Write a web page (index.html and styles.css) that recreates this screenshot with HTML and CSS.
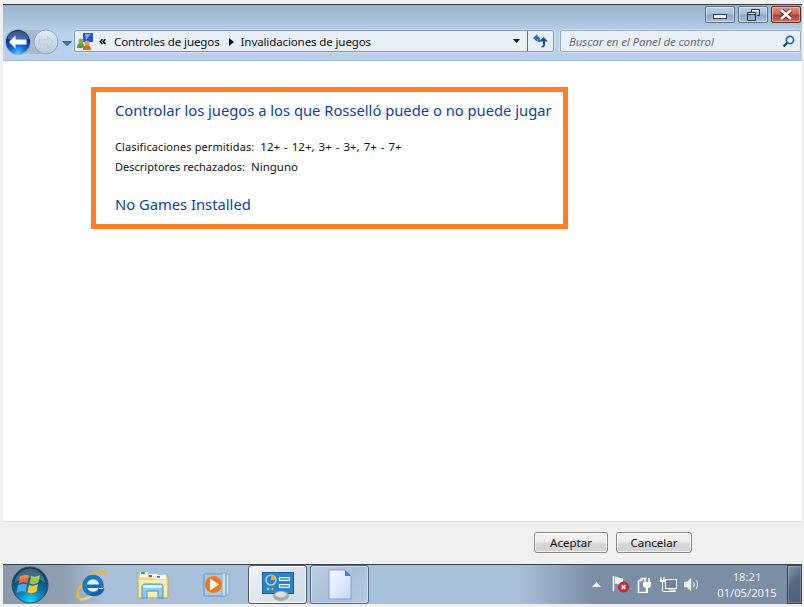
FILE: index.html
```html
<!DOCTYPE html>
<html lang="es">
<head>
<meta charset="utf-8">
<title>Invalidaciones de juegos</title>
<link rel="stylesheet" href="styles.css">
</head>
<body>
<div class="screen">
  <div class="window">
    <header class="chrome">
      <div class="caption">
        <button class="cap cap-min"><span class="min-glyph"></span></button>
        <button class="cap cap-restore">
          <svg width="13" height="12" viewBox="0 0 13 12"><path d="M4.500 3V.5h8v6H10M.5 3.500h8v8h-8zM.5 5.500h8" fill="none" stroke="#26323f" stroke-width="1"/><path d="M5 1.500h7M1 4.500h7" stroke="#fff"/></svg>
        </button>
        <button class="cap cap-close">
          <svg width="16" height="11" viewBox="0 0 16 11"><path d="M3 1l10 9M13 1L3 10" stroke="#5a2a22" stroke-width="4.400"/><path d="M3 1l10 9M13 1L3 10" stroke="#fff" stroke-width="2.600"/></svg>
        </button>
      </div>
      <div class="navrow">
        <div class="navpill">
          <svg class="nav-svg" width="60" height="28" viewBox="0 0 60 28">
            <defs>
              <radialGradient id="backg" cx=".5" cy=".95" r=".85"><stop offset="0" stop-color="#3fd2fd"/><stop offset=".4" stop-color="#0f66cc"/><stop offset=".8" stop-color="#06348c"/><stop offset="1" stop-color="#021f60"/></radialGradient>
              <linearGradient id="fwdg" x1="0" y1="0" x2="0" y2="1"><stop offset="0" stop-color="#e6edf5"/><stop offset="1" stop-color="#b5c8dc"/></linearGradient>
            </defs>
            <rect x="12" y="2" width="34" height="24" rx="10" fill="#a6b9ce"/>
            <circle cx="42" cy="14" r="12" fill="url(#fwdg)" stroke="#8fa3b8"/>
            <path d="M49 14l-5.500-5.500v3.300h-8.500v4.400h8.500v3.300z" fill="#cfdbe8" stroke="#a9bbce" stroke-width=".6"/>
            <circle cx="14" cy="14" r="12.600" fill="url(#backg)" stroke="#9fb2c8" stroke-width="1.200"/>
            <path d="M3.500 11a10.500 8 0 0 1 21 0a20 7 0 0 1-21 0" fill="#fff" opacity=".25"/>
            <path d="M5 14l6.500-6.500v4h11v5h-11v4z" fill="#fff"/>
          </svg>
          <svg class="drop" width="10" height="5" viewBox="0 0 10 5"><path d="M.5.5h9L5 4.500z" fill="#2f7fc6" stroke="#1d4f80" stroke-width=".7"/></svg>
        </div>
        <div class="address">
          <svg class="homeicon" width="17" height="17" viewBox="0 0 17 17">
            <rect x="6" y="0" width="10" height="9" fill="#2a4fd0"/>
            <path d="M8 1l6 0-5 6z" fill="#7fa6ef"/>
            <circle cx="4" cy="8" r="2.600" fill="#7cb55a"/><path d="M0 15c0-4 2-5 4-5s3 1 3 3v2z" fill="#5c9a3e"/>
            <circle cx="10" cy="10" r="2.600" fill="#d9a25e"/><path d="M6 17c0-4 2-5 4-5s4 1 4 5z" fill="#c6791f"/>
          </svg>
          <span class="chev">«</span>
          <span class="crumb crumb-first">Controles de juegos</span>
          <svg class="crumb-arrow" width="5" height="8" viewBox="0 0 5 8"><path d="M0 0l5 4-5 4z" fill="#111"/></svg>
          <span class="crumb">Invalidaciones de juegos</span>
          <svg class="addr-drop" width="7" height="4" viewBox="0 0 7 4"><path d="M0 0h7L3.500 4z" fill="#101a3a"/></svg>
          <span class="refresh">
            <svg width="15" height="14" viewBox="0 0 15 14">
              <path d="M0 4l4.500-4v2.600c2 0 2.500 1 2.500 2.400v3H5V6c0-.7-.2-1-.5-1v3z" fill="#2b6fb8"/>
              <path d="M10.500 3L15 7.500h-3V11c0 1.500-1 2.500-3.500 2.500V12c1 0 1.500-.4 1.500-1V7.500H6z" fill="#174f9a"/>
            </svg>
          </span>
        </div>
        <div class="search">
          <span class="search-text">Buscar en el Panel de control</span>
          <svg width="13" height="13" viewBox="0 0 13 13"><circle cx="8" cy="5" r="3.600" fill="#eaf3fb" stroke="#2a6cb0" stroke-width="1.800"/><path d="M5.300 7.800L1.500 11.500" stroke="#173f78" stroke-width="2.400"/></svg>
        </div>
      </div>
    </header>
    <main class="content">
      <section class="panel">
        <h1 class="link-title">Controlar los juegos a los que Rosselló puede o no puede jugar</h1>
        <p class="meta meta-first"><span>Clasificaciones permitidas:</span><span class="rating">12+ - 12+, 3+ - 3+, 7+ - 7+</span></p>
        <p class="meta"><span>Descriptores rechazados:</span><span class="rating">Ninguno</span></p>
        <h2 class="link-title none">No Games Installed</h2>
      </section>
    </main>
    <footer class="actions">
      <button class="btn btn-ok">Aceptar</button>
      <button class="btn btn-cancel">Cancelar</button>
    </footer>
  </div>
  <div class="taskbar">
    <svg class="orb" width="38" height="38" viewBox="0 0 38 38">
      <defs>
        <radialGradient id="orbg" cx=".5" cy=".95" r=".95"><stop offset="0" stop-color="#1cdcf8"/><stop offset=".3" stop-color="#0d8cbc"/><stop offset=".65" stop-color="#0d5580"/><stop offset="1" stop-color="#12334f"/></radialGradient>
      </defs>
      <circle cx="19" cy="19" r="18" fill="url(#orbg)" stroke="#2a5368"/>
      <path d="M9 10.500c3-2 6-2 9-1l-1.500 7.500c-3-1-6-1-9 1z" fill="#ea6a30"/>
      <path d="M20 10c3 1 6 1 9-1l-1.500 7.500c-3 2-6 2-9 1z" fill="#9ac845"/>
      <path d="M7 19.500c3-2 6-2 9-1L14.500 26c-3-1-6-1-9 1z" fill="#4aa8ea"/>
      <path d="M18 19c3 1 6 1 9-1L25.500 25.500c-3 2-6 2-9 1z" fill="#fcc634"/>
      <path d="M3.500 17C5 6 14 2.500 19 2.500S33 6 34.500 17C26 10 12 10 3.500 17z" fill="#fff" opacity=".2"/>
    </svg>
    <span class="tb-icon tb-ie">
      <svg width="32" height="32" viewBox="0 0 32 32">
        <path d="M5 30C-3 25 10 5 27 2c3-.5 4 1 3 4" fill="none" stroke="#e6b83a" stroke-width="2.600"/>
        <path d="M5 30c3 1 8-1 12-4" fill="none" stroke="#edd27a" stroke-width="2.400"/>
        <circle cx="18" cy="16.500" r="8.500" fill="#dff0fb" stroke="#1b78c4" stroke-width="4.500"/>
        <path d="M12 15.500h14v3.500H12z" fill="#1668b5"/>
        <path d="M24 19.500h5.500c-1 4-4.500 7.500-10 7.500-2 0-3.500-.5-5-1.500l3-2.500c3 1 5.500 0 7-3.500z" fill="#0f5ea8"/>
        <path d="M24 19h4v1h-4z" fill="#dff0fb"/>
      </svg>
    </span>
    <span class="tb-icon tb-folder">
      <svg width="32" height="28" viewBox="0 0 32 28">
        <path d="M1 3h11l2 2h17v22H1z" fill="#eed98c" stroke="#c0a864"/>
        <rect x="3" y="1" width="8" height="5" fill="#fff"/><rect x="4" y="1" width="4" height="2" fill="#1db30e"/>
        <rect x="12" y="3" width="8" height="4" fill="#fff"/><rect x="12" y="4" width="3" height="2" fill="#d4352c"/>
        <rect x="20" y="4" width="9" height="4" fill="#fff"/><rect x="20" y="5" width="3" height="2" fill="#2a8ae0"/>
        <path d="M2 9h28v17H2z" fill="#faedb0"/>
        <path d="M5 27v-11c0-2 1-3 3-3h15c2 0 3 1 3 3v11h-5v-7H10v7z" fill="#8dcde8" stroke="#4a91b8"/>
        <path d="M6 14h19v3H6z" fill="#d5effa"/>
      </svg>
    </span>
    <span class="tb-icon tb-wmp">
      <svg width="32" height="26" viewBox="0 0 32 26">
        <path d="M4 2h22v22H4z" fill="#a9cbe4" stroke="#5d94bd"/>
        <path d="M22 1h4v23h-4zM26 2h3v21h-3z" fill="#cde2f1" stroke="#7eabcc"/>
        <circle cx="13.500" cy="12.500" r="8.500" fill="#ee7a19"/>
        <path d="M10 6.500l9 6-9 6z" fill="#fff"/>
      </svg>
    </span>
    <button class="task task-active">
      <svg class="cp-icon" width="32" height="29" viewBox="0 0 32 29">
        <rect x=".5" y=".5" width="31" height="21" fill="#2e83c5" stroke="#1e5e96"/>
        <circle cx="9" cy="8" r="5" fill="none" stroke="#cfe9f8" stroke-width="1.200"/>
        <path d="M9 3a5 5 0 0 1 5 5H9z" fill="#f6a11c"/>
        <rect x="17.500" y="5.500" width="10" height="3" fill="#5aa6dc" stroke="#e8f5fc"/>
        <rect x="17.500" y="12.500" width="10" height="3" fill="#5aa6dc" stroke="#e8f5fc"/>
        <circle cx="6" cy="17" r="1.200" fill="#9fe0f7"/><circle cx="10.500" cy="17" r="1.200" fill="#f6a11c"/>
        <ellipse cx="19" cy="24" rx="8" ry="5" fill="#a9aba9"/>
        <ellipse cx="19" cy="22.500" rx="5.500" ry="3" fill="#dfe0de"/>
      </svg>
    </button>
    <button class="task">
      <svg width="24" height="31" viewBox="0 0 24 31">
        <defs><linearGradient id="pageg" x1="0" y1="0" x2="1" y2="1"><stop offset="0" stop-color="#f7fbff"/><stop offset="1" stop-color="#c9d8fb"/></linearGradient></defs>
        <path d="M1 1h16l6 6v23H1z" fill="url(#pageg)" stroke="#8d9fcf"/>
        <path d="M17 1l6 6h-6z" fill="#2f86d8"/>
      </svg>
    </button>
    <div class="tray">
      <svg class="tray-up" width="9" height="5" viewBox="0 0 9 5"><path d="M0 5l4.500-5L9 5z" fill="#f2f5f8"/></svg>
      <svg class="tray-flag" width="17" height="17" viewBox="0 0 17 17">
        <path d="M1.500 0v15" stroke="#fff" stroke-width="1.500"/>
        <path d="M3 1c3-1 4 2 8 1v7c-4 1-5-2-8-1z" fill="#eef1f4"/>
        <circle cx="11.500" cy="11" r="5" fill="#e2262c" stroke="#7d1a1a" stroke-width=".6"/>
        <path d="M9.500 9l4 4M13.500 9l-4 4" stroke="#fff" stroke-width="1.500"/>
      </svg>
      <svg class="tray-plug" width="15" height="16" viewBox="0 0 15 16">
        <path d="M1.500 3.500h3v-2h5M1.500 3.500v12h8v-4" fill="none" stroke="#fff" stroke-width="1.500"/>
        <path d="M6 5h8v3c0 2-1 3-3 3h-2c-1 0-3-1-3-3z" fill="#fff"/>
        <path d="M8 1v4M12 1v4" stroke="#fff" stroke-width="1.500"/>
        <path d="M10 11v5" stroke="#fff" stroke-width="2"/>
      </svg>
      <svg class="tray-net" width="17" height="15" viewBox="0 0 17 15">
        <path d="M1 0v3M4 0v3" stroke="#fff" stroke-width="1.200"/><path d="M0 3h5v2H0z" fill="#fff"/><path d="M2.500 5v9" stroke="#fff" stroke-width="1.200"/>
        <rect x="5.500" y="2.500" width="11" height="9" fill="#6f8299" stroke="#fff"/>
        <path d="M9 13h6v1.500H3" stroke="#fff" stroke-width="1.200" fill="none"/>
      </svg>
      <svg class="tray-vol" width="15" height="15" viewBox="0 0 15 15">
        <path d="M0 5h3l4-4v13l-4-4H0z" fill="#eef1f4" stroke="#dfe4ea" stroke-width=".5"/>
        <path d="M9.500 5c1 1.500 1 3.500 0 5M12 3c2 2.500 2 6.500 0 9" fill="none" stroke="#e8ecf1" stroke-width="1.100"/>
      </svg>
      <div class="clock"><span>18:21</span><span>01/05/2015</span></div>
      <span class="show-desktop"></span>
    </div>
  </div>
</div>
</body>
</html>
```
FILE: styles.css
```css
* { box-sizing: border-box; }
html, body { margin: 0; padding: 0; background: #f0f0f0; }
body { font-family: "Noto Sans", "Open Sans", sans-serif; font-size: 12px; color: #000; overflow: hidden; }
button { font-family: inherit; padding: 0; cursor: default; }
svg { display: block; flex: none; }

.screen { width: 804px; height: 607px; padding: 4px 2px 3px 3px; display: flex; flex-direction: column; }
.window { flex: 1; display: flex; flex-direction: column; min-height: 0; }

/* window chrome */
.chrome { height: 57px; flex: none; border-top: 1px solid #3a3f45; border-bottom: 1px solid #a3bcd6; background: linear-gradient(#9ab3cf 0, #a9c3de 16px, #b9d1ea 28px, #b9d1ea 100%); display: flex; flex-direction: column; }
.caption { height: 17px; margin-top: 1px; display: flex; justify-content: flex-end; gap: 3px; padding-right: 1px; }
.cap { width: 30px; height: 17px; border: 1px solid #5d7187; border-radius: 2px; display: flex; align-items: center; justify-content: center; background: linear-gradient(#bfd2e6 0, #a7bfd8 48%, #88a5c4 52%, #aac4de 100%); box-shadow: inset 0 0 0 1px rgba(255,255,255,.4); }
.cap-close { border-color: #5d2a2f; background: linear-gradient(#dc9184 0, #c86a58 48%, #b13d2b 52%, #c7705c 100%); }
.min-glyph { width: 14px; height: 5px; border: 1px solid #2f3d4c; background: #fff; margin-top: 4px; }

.navrow { display: flex; align-items: flex-start; height: 24px; margin-top: 7px; }
.navpill { width: 71px; display: flex; align-items: center; flex: none; margin-top: -2px; height: 28px; }
.nav-svg { margin-left: 1px; }
.drop { margin-left: -2px; margin-top: 3px; }
.address { width: 480px; height: 22px; display: flex; align-items: center; background: #e9f0f8; border: 1px solid #8196ab; border-radius: 2px; box-shadow: 0 0 0 1px rgba(255,255,255,.35); }
.homeicon { margin-left: 2px; }
.chev { width: 9px; margin-left: 5px; font-size: 12px; line-height: 1; font-weight: 700; }
.crumb { font-size: 11.600px; color: #111; white-space: nowrap; letter-spacing: -.15px; }
.crumb-first { margin-left: 6px; }
.crumb-arrow { margin: 1px 7px 0 9px; }
.addr-drop { margin-left: auto; margin-right: 7px; }
.refresh { width: 26px; align-self: stretch; border-left: 1px solid #5a6a7c; display: flex; align-items: center; justify-content: center; }
.search { width: 241px; height: 22px; margin-left: 6px; display: flex; align-items: center; justify-content: space-between; padding: 0 5px 0 8px; background: #e9f0f8; border: 1px solid #9aabbd; border-radius: 2px; box-shadow: 0 0 0 1px rgba(255,255,255,.35); }
.search-text { font-size: 11.500px; font-style: italic; color: #6f6f6f; white-space: nowrap; letter-spacing: -.1px; }

/* content */
.content { flex: 1; background: #fff; padding: 26px 0 0 88px; min-height: 0; }
.panel { width: 477px; height: 142px; border: 5px solid #ff7f27; padding: 8px 0 0 19px; }
.link-title { margin: 0; font-weight: 400; font-size: 14.750px; line-height: 20px; color: #0b3fa8; white-space: nowrap; }
.meta { margin: 0; display: flex; gap: 6px; font-size: 11px; line-height: 21px; height: 21px; white-space: nowrap; color: #111; }
.meta-first { margin-top: 16px; height: 20px; }
.rating { font-size: 11.500px; word-spacing: 1px; }
.meta-first span:first-child { letter-spacing: .1px; }
.none { margin-top: 17px; }

/* footer */
.actions { height: 43px; flex: none; border-top: 1px solid #dfdfdf; background: #f0f0f0; display: flex; gap: 8px; justify-content: flex-end; padding: 10px 110px 0 0; }
.btn { height: 21px; font-size: 11.500px; color: #111; border: 1px solid #8a8a8a; border-radius: 3px; background: linear-gradient(#f4f4f4 0, #ececec 48%, #d8d8d8 52%, #d2d2d2 100%); box-shadow: inset 0 0 0 1px rgba(255,255,255,.7); }
.btn-ok { width: 74px; }
.btn-cancel { width: 76px; }

/* taskbar */
.taskbar { height: 40px; flex: none; display: flex; align-items: center; border-top: 1px solid #3a4450; background: linear-gradient(90deg, #8b98a8 0, #8f9eb0 60px, #a9c0dc 100px, #a9c0dc 515px, #7b8ea6 590px, #7b8ea6 100%); }
.orb { margin-left: 8px; }
.tb-icon { display: flex; align-items: center; justify-content: center; }
.tb-ie { margin-left: 26px; }
.tb-folder { margin-left: 30px; }
.tb-wmp { margin-left: 31px; }
.task { height: 39px; width: 59px; margin-left: 3px; display: flex; align-items: center; justify-content: center; border: 1px solid #56677a; border-radius: 3px; background: linear-gradient(135deg, #bdd0e4 0, #a8c0da 50%, #b5cae0 100%); box-shadow: inset 0 0 0 1px rgba(255,255,255,.4); }
.task-active { margin-left: 16px; border-color: #4a5868; background: linear-gradient(135deg, #f0f4f8 0, #dbe4ee 50%, #cfdbe8 100%); box-shadow: inset 0 0 0 1px #fff; }
.cp-icon { margin-top: 3px; }
.tray { margin-left: auto; display: flex; align-items: center; height: 100%; }
.tray-up { margin-right: 11px; }
.tray-flag { margin-right: 8px; }
.tray-plug { margin-right: 8px; }
.tray-net { margin-right: 7px; }
.clock { width: 80px; margin-left: 8px; display: flex; flex-direction: column; align-items: center; font-size: 11.200px; line-height: 16px; color: #f2f5f8; text-align: center; }
.show-desktop { width: 15px; height: 39px; border: 1px solid #39475a; background: linear-gradient(135deg, #8a9aab, #566880 45%, #4e5f76); box-shadow: inset 0 0 0 1px rgba(255,255,255,.2); }
```
